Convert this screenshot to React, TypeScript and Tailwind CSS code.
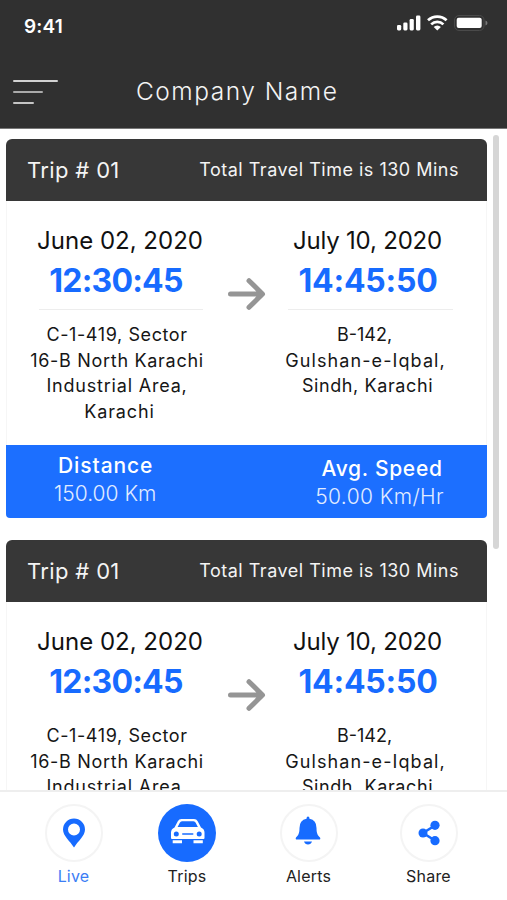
import type { ReactNode } from "react"

type TripProps = {
    expanded?: boolean
}

type TabProps = {
    label: string
    active?: boolean
    className?: string
    labelClass?: string
    children: ReactNode
}

type Line = {
    text: string
    className: string
}

const fromAddress: Line[] = [
    { text: "C-1-419, Sector", className: "mr-[6px] tracking-[0.6px]" },
    { text: "16-B North Karachi", className: "mr-[6px] tracking-[0.7px]" },
    { text: "Industrial Area,", className: "mr-[6px] tracking-[0.8px]" },
    { text: "Karachi", className: "mr-[1px] tracking-[0.9px]" },
]

const toAddress: Line[] = [
    { text: "B-142,", className: "mr-[11px]" },
    { text: "Gulshan-e-Iqbal,", className: "mr-[9px] tracking-[1.1px]" },
    { text: "Sindh, Karachi", className: "mr-[5px] tracking-[0.6px]" },
]

function StatusBar() {
    return (
        <div className="flex h-[46px] items-start justify-between pl-6 pr-[19px] pt-[13px] text-white">
            <span className="pt-px text-[19px] font-semibold leading-[26px] tracking-[0.2px]">9:41</span>
            <svg width="92" height="20" viewBox="0 0 92 20" fill="white">
                <rect x="1" y="12" width="4.2" height="5.4" rx="1.3" />
                <rect x="7.3" y="9.5" width="4.2" height="7.9" rx="1.3" />
                <rect x="13.6" y="6" width="4.2" height="11.4" rx="1.3" />
                <rect x="20" y="2.5" width="4.4" height="14.9" rx="1.3" />
                <g fill="none" stroke="white" strokeWidth="2.7">
                    <path d="M32 7.3a13.5 13.5 0 0 1 18.6 0" />
                    <path d="M35.2 11.4a8.7 8.7 0 0 1 12.2 0" />
                </g>
                <path d="M37.7 14.1a5 5 0 0 1 7.2 0L41.3 17.6z" />
                <rect x="58.5" y="2.5" width="29.5" height="15" rx="4.5" fill="none" stroke="#4a4a4a" />
                <rect x="60.7" y="4.7" width="25" height="10.4" rx="2" />
                <path d="M89.500 7.500v5q2-.8 2-2.500t-2-2.500z" fill="#777" />
            </svg>
        </div>
    )
}

function Header() {
    return (
        <header className="h-[129px] shrink-0 border-b border-[#777] bg-[#303030]">
            <StatusBar />
            <div className="flex h-[82px] items-center pl-[13px] pt-px">
                <div className="flex w-[123px] flex-col gap-[9px] pt-2">
                    <span className="h-0.5 w-[45px] rounded bg-[#d2d2d2]" />
                    <span className="h-0.5 w-[30px] rounded bg-[#aaa]" />
                    <span className="h-0.5 w-[21px] rounded bg-[#c4c4c4]" />
                </div>
                <h1 className="mt-[6px] whitespace-nowrap text-[24.5px] font-light leading-8 tracking-[1.5px] text-[#f4f4f4]">Company Name</h1>
            </div>
        </header>
    )
}

function Address({ lines }: { lines: Line[] }) {
    return (
        <div className="flex flex-col items-center text-[18px] leading-[25.6px] text-[#161616]">
            {lines.map(line => (
                <p key={line.text} className={line.className}>{line.text}</p>
            ))}
        </div>
    )
}

function Trip({ expanded }: TripProps) {
    const rule = expanded ? "border-[#ededed]" : "border-transparent"

    return (
        <article className="w-[481px] shrink-0 whitespace-nowrap">
            <header className="flex h-[62px] items-center justify-between rounded-t-[6px] bg-[#373737] pl-[21px] pr-[28px] text-[#f4f4f4]">
                <h2 className="text-[22px] leading-8 tracking-[0.35px]">Trip # 01</h2>
                <p className="text-[18px] leading-8 tracking-[0.5px]">Total Travel Time is 130 Mins</p>
            </header>
            <div className="flex h-[243.5px] border-x border-[#f6f6f6] pl-[18px] pt-[24px]">
                <section className="flex w-[190px] flex-col items-center">
                    <h3 className="text-2xl leading-8 text-[#111]">June 02, 2020</h3>
                    <p className="mr-[8px] text-[32px] font-bold leading-[48px] tracking-[-0.8px] text-[#176bff]">12:30:45</p>
                    <div className={`ml-[2px] mb-[12px] mt-[4px] w-[164px] border-t ${rule}`} />
                    <Address lines={fromAddress} />
                </section>
                <svg className="mt-[49px] w-[60px] shrink-0" height="40" viewBox="0 0 60 40" fill="none" stroke="#959595" strokeWidth="5" strokeLinecap="round" strokeLinejoin="round">
                    <path d="M15.5 20h31M34 6.7l13.500 13.300L34 33.300" />
                </svg>
                <section className="flex w-[190px] flex-col items-center">
                    <h3 className="mr-[5px] text-2xl leading-8 tracking-[-0.2px] text-[#111]">July 10, 2020</h3>
                    <p className="mr-[4px] text-[32px] font-bold leading-[48px] tracking-[-0.25px] text-[#176bff]">14:45:50</p>
                    <div className={`mb-[12px] mt-[4px] w-[165px] border-t ${rule}`} />
                    <Address lines={toAddress} />
                </section>
            </div>
            {expanded && (
                <footer className="flex h-[73px] justify-between rounded-b-sm bg-[#1c6fff] pl-[48px] pr-[43px] text-center text-white">
                    <div className="pt-[7px]">
                        <h4 className="pl-px text-[21px] font-medium leading-7 tracking-[0.9px]">Distance</h4>
                        <p className="text-[21px] font-light leading-7 text-[#e2ecff]">150.00 Km</p>
                    </div>
                    <div className="pt-[10px]">
                        <h4 className="pl-[5px] text-[21px] font-medium leading-7 tracking-[0.7px]">Avg. Speed</h4>
                        <p className="text-[21px] font-light leading-7 tracking-[0.4px] text-[#e2ecff]">50.00 Km/Hr</p>
                    </div>
                </footer>
            )}
        </article>
    )
}

function Tab({ label, active, className = "", labelClass = "text-[#222]", children }: TabProps) {
    return (
        <button className={`flex w-[58px] flex-col items-center ${className}`}>
            <span className={`flex size-[58px] items-center justify-center rounded-full ${active ? "bg-[#176bff]" : "border-2 border-[#f4f4f4] bg-white"}`}>
                {children}
            </span>
            <span className={`mt-[2px] text-[16px] leading-6 tracking-[0.2px] ${labelClass}`}>{label}</span>
        </button>
    )
}

function TabBar() {
    return (
        <nav className="flex h-[110px] shrink-0 border-t-2 border-[#eee] bg-white pl-[44.5px] pt-3">
            <Tab label="Live" labelClass="text-[#3b7df5]">
                <svg className="-mt-px" width="24" height="30" viewBox="0 0 24 30" fill="#176bff">
                    <path fillRule="evenodd" d="M12 .5A11 11 0 0 0 1 11.5C1 18 8 23 12 29.5 16 23 23 18 23 11.5A11 11 0 0 0 12 .5zM12 5.500a6 6 0 1 1 0 12 6 6 0 0 1 0-12z" />
                </svg>
            </Tab>
            <Tab label="Trips" active className="ml-[55.5px]">
                <svg className="-mt-[3px] ml-0.5" width="34" height="25" viewBox="0 0 34 25" fill="white">
                    <path fillRule="evenodd" d="M10.500 0h12.500Q25.500 0 26.700 2.300L30 8.600q3.500 1.500 3.500 5V19q0 1-1 1H1q-1 0-1-1v-5.400q0-3.500 3.500-5L6.800 2.300Q8 0 10.500 0zM11 2.200Q9.500 2.200 8.800 3.700L6.600 8h20.300L24.700 3.700Q24 2.200 22.500 2.200zM5.300 12.500a2.500 2.500 0 1 0 0 5 2.500 2.500 0 0 0 0-5zm22.900 0a2.500 2.500 0 1 0 0 5 2.500 2.500 0 0 0 0-5zM11.800 14.200q-.8 0-.8.8t.8.8h9.900q.8 0 .8-.8t-.8-.8z" />
                    <path d="M1.700 21.200h9.300v3.100H1.700zM22.500 21.200h9.300v3.100h-9.300z" />
                </svg>
            </Tab>
            <Tab label="Alerts" className="ml-[63.5px]">
                <svg className="-mt-1 -ml-0.5" width="26" height="30" viewBox="0 0 26 30" fill="#176bff">
                    <path d="M13 .5q1.500 0 1.500 2.300Q21.500 4 21.500 12c0 6 1.500 7.500 3.500 9.500q1 2-1 2H2q-2 0-1-2c2-2 3.500-3.500 3.500-9.500q0-8 7-9.200Q11.500.5 13 .5zM9 25.500h8Q16 28.500 13 28.500T9 25.500z" />
                </svg>
            </Tab>
            <Tab label="Share" className="ml-[62px]">
                <svg className="-mt-px" width="22" height="26" viewBox="0 0 22 26" fill="#176bff">
                    <path d="M17 5.500 5 13l12 7.500" fill="none" stroke="#176bff" strokeWidth="2.6" />
                    <circle cx="5" cy="13" r="4.500" />
                    <circle cx="17" cy="5.300" r="4.600" />
                    <circle cx="17" cy="20.700" r="4.600" />
                </svg>
            </Tab>
        </nav>
    )
}

export default function App() {
    return (
        <div className="flex h-[900px] w-[507px] flex-col overflow-hidden bg-white font-['Inter',sans-serif]">
            <Header />
            <main className="flex min-h-0 flex-1 justify-between overflow-hidden pl-[6px] pr-2">
                <div className="flex flex-col gap-[22.5px] pt-[10px]">
                    <Trip expanded />
                    <Trip />
                </div>
                <div className="mt-[6px] h-[414px] w-[6px] rounded-sm bg-[#d6d6d6]" />
            </main>
            <TabBar />
        </div>
    )
}
